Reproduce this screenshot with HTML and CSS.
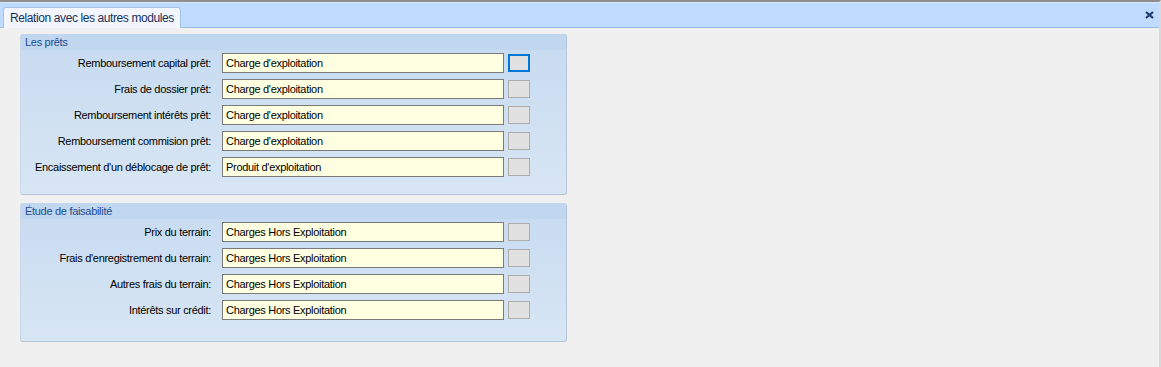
FILE: index.html
```html
<!DOCTYPE html>
<html lang="fr">
<head>
    <meta charset="UTF-8">
    <title>Relation avec les autres modules</title>
    <link rel="stylesheet" href="styles.css">
</head>
<body>

<div class="window">
    <div class="tab-bar">
        <div class="tab">Relation avec les autres modules</div>
        <div class="close">
            <svg width="9" height="8" viewBox="0 0 9 8">
                <path d="M1 1 L8 7 M8 1 L1 7" stroke="#1b3a70" stroke-width="2.2" fill="none"/>
            </svg>
        </div>
    </div>

    <div class="content">
        <div class="group group-prets">
            <div class="group-title">Les prêts</div>
            <div class="group-body">
                <div class="row">
                    <label>Remboursement capital prêt:</label>
                    <div class="field">Charge d'exploitation</div>
                    <div class="pick focused"></div>
                </div>
                <div class="row">
                    <label>Frais de dossier prêt:</label>
                    <div class="field">Charge d'exploitation</div>
                    <div class="pick"></div>
                </div>
                <div class="row">
                    <label>Remboursement intérêts prêt:</label>
                    <div class="field">Charge d'exploitation</div>
                    <div class="pick"></div>
                </div>
                <div class="row">
                    <label>Remboursement commision prêt:</label>
                    <div class="field">Charge d'exploitation</div>
                    <div class="pick"></div>
                </div>
                <div class="row">
                    <label>Encaissement d'un déblocage de prêt:</label>
                    <div class="field">Produit d'exploitation</div>
                    <div class="pick"></div>
                </div>
            </div>
        </div>

        <div class="group group-etude">
            <div class="group-title">Étude de faisabilité</div>
            <div class="group-body">
                <div class="row">
                    <label>Prix du terrain:</label>
                    <div class="field">Charges Hors Exploitation</div>
                    <div class="pick"></div>
                </div>
                <div class="row">
                    <label>Frais d'enregistrement du terrain:</label>
                    <div class="field">Charges Hors Exploitation</div>
                    <div class="pick"></div>
                </div>
                <div class="row">
                    <label>Autres frais du terrain:</label>
                    <div class="field">Charges Hors Exploitation</div>
                    <div class="pick"></div>
                </div>
                <div class="row">
                    <label>Intérêts sur crédit:</label>
                    <div class="field">Charges Hors Exploitation</div>
                    <div class="pick"></div>
                </div>
            </div>
        </div>
    </div>
</div>

</body>
</html>
```

FILE: styles.css
```css
body {
    margin: 0;
    font-family: "Liberation Sans", Arial, sans-serif;
    font-size: 11px;
    letter-spacing: -0.3px;
    color: #000;
    background-color: #f0f0f0;
}
.window {
    height: 367px;
    border-top: 2px solid #8e8e8e;
    border-right: 2px solid #d9d9d9;
    box-sizing: border-box;
    background-color: #f0f0f0;
}
.tab-bar {
    display: flex;
    align-items: flex-end;
    justify-content: space-between;
    height: 26px;
    padding-left: 3px;
    background-color: #bfdbff;
    border-top: 1px solid #d7e7fb;
    border-bottom: 1px solid #9bbbe3;
    box-sizing: border-box;
}
.tab {
    height: 20px;
    padding: 0 6px 0 6px;
    margin-bottom: -1px;
    line-height: 20px;
    font-size: 12px;
    letter-spacing: -0.4px;
    color: #15315e;
    background-color: #f3f7fd;
    border: 1px solid #a5c3e8;
    border-bottom: none;
    border-radius: 3px 3px 0 0;
}
.close {
    align-self: center;
    display: flex;
    margin-right: 5px;
}
.content {
    padding: 6px 0 0 20px;
}
.group {
    width: 547px;
    margin-bottom: 8px;
    border-radius: 3px;
    border-right: 1px solid #b4c6d9;
    border-bottom: 1px solid #b4c6d9;
    border-left: 1px solid #c9d9ea;
    box-sizing: border-box;
    background: linear-gradient(#c6daf0, #d8e6f4);
    overflow: hidden;
}
.group-prets {
    height: 161px;
}
.group-etude {
    height: 139px;
}
.group-title {
    height: 16px;
    line-height: 16px;
    padding-left: 4px;
    font-size: 11px;
    color: #1d4c92;
    background-color: #c0d7ef;
}
.group-body {
    display: flex;
    flex-direction: column;
    gap: 6px;
    padding-top: 3px;
}
.row {
    display: grid;
    grid-template-columns: 190px 282px 22px;
    column-gap: 11px;
    align-items: center;
    height: 20px;
}
.row label {
    text-align: right;
    color: #000;
}
.field {
    height: 20px;
    line-height: 18px;
    padding-left: 3px;
    background-color: #ffffe1;
    border: 1px solid #7a7a7a;
    box-sizing: border-box;
    white-space: nowrap;
}
.pick {
    width: 22px;
    height: 18px;
    margin-left: -7px;
    background-color: #e1e1e1;
    border: 1px solid #adadad;
    box-sizing: border-box;
}
.pick.focused {
    border: 2px solid #0078d7;
}
```
